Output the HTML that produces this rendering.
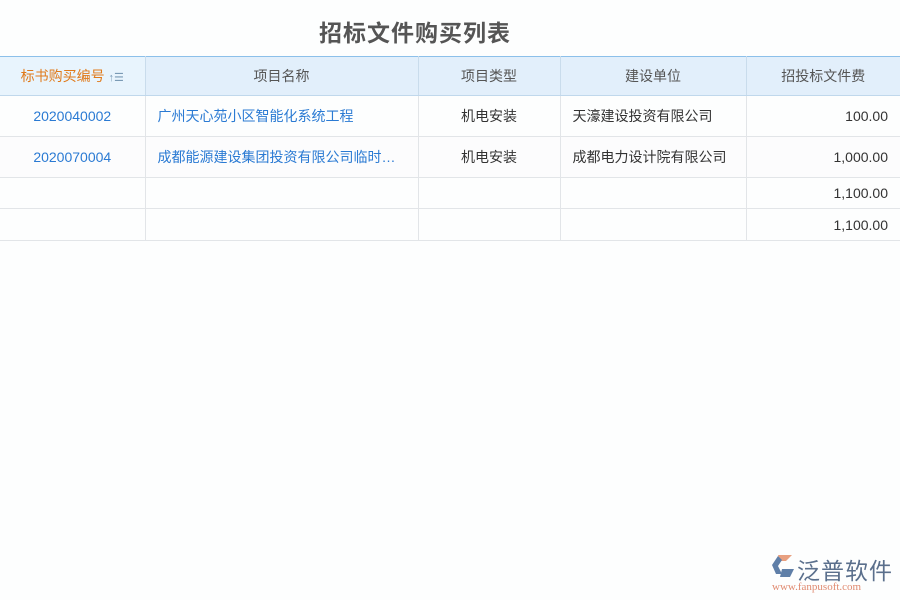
<!DOCTYPE html><html><head><meta charset="utf-8"><style>
body{margin:0;width:900px;height:600px;background:#fdfefe;font-family:"Liberation Sans","Noto Sans CJK SC",sans-serif;position:relative;overflow:hidden}
h1{position:absolute;top:14px;left:0;width:830px;text-align:center;margin:0;font-size:23px;color:#555;font-weight:bold;letter-spacing:1px}
table{position:absolute;top:56px;left:0;border-collapse:collapse;width:900px;font-size:14px;table-layout:fixed}
th{height:38px;padding:0;background:#e2effb;color:#555;font-weight:normal;border:1px solid #c9dcec;border-top:1px solid #8cc0ea;border-bottom:1px solid #c0d8ec}
th:first-child{background:#e8f4fd;color:#e07a1a;border-left:none}
td{border:1px solid #e2e5e8;color:#333;padding:0 12px}
td:first-child{border-left:none}th:last-child,td:last-child{border-right:none}
.r{height:41px}.s{height:31px}.s2{height:32px}
.b{color:#2a7ad3}.c{text-align:center}.rt{text-align:right}
</style></head><body>
<h1>招标文件购买列表</h1>
<table><colgroup><col style="width:145px"><col style="width:273px"><col style="width:142px"><col style="width:186px"><col style="width:154px"></colgroup>
<tr><th>标书购买编号 <span style="color:#7a9ab5;font-size:11px">↑☰</span></th><th>项目名称</th><th>项目类型</th><th>建设单位</th><th>招投标文件费</th></tr>
<tr class="r"><td class="b c">2020040002</td><td class="b">广州天心苑小区智能化系统工程</td><td class="c">机电安装</td><td>天濠建设投资有限公司</td><td class="rt">100.00</td></tr>
<tr class="r" style="background:#fcfcfd"><td class="b c">2020070004</td><td class="b" style="white-space:nowrap;overflow:hidden;text-overflow:ellipsis">成都能源建设集团投资有限公司临时设施工程</td><td class="c">机电安装</td><td>成都电力设计院有限公司</td><td class="rt">1,000.00</td></tr>
<tr class="s"><td></td><td></td><td></td><td></td><td class="rt">1,100.00</td></tr>
<tr class="s2"><td></td><td></td><td></td><td></td><td class="rt">1,100.00</td></tr>
</table>
<div style="position:absolute;left:770px;top:553px;width:26px;height:26px;">
<svg width="26" height="26"><path d="M8 2h14l-6 6H10z" fill="#e8a080"/><path d="M2 12l6-9 4 4-4 6 4 8H6z" fill="#5f7fa8"/><path d="M12 16h12l-4 8h-10z" fill="#5f7fa8"/></svg></div>
<div style="position:absolute;left:797px;top:552px;font-size:23px;color:#5a6f8c;letter-spacing:1px">泛普软件</div>
<div style="position:absolute;left:772px;top:581px;font-size:11px;color:#e08a70;font-family:'Liberation Serif',serif">www.fanpusoft.com</div>
</body></html>
